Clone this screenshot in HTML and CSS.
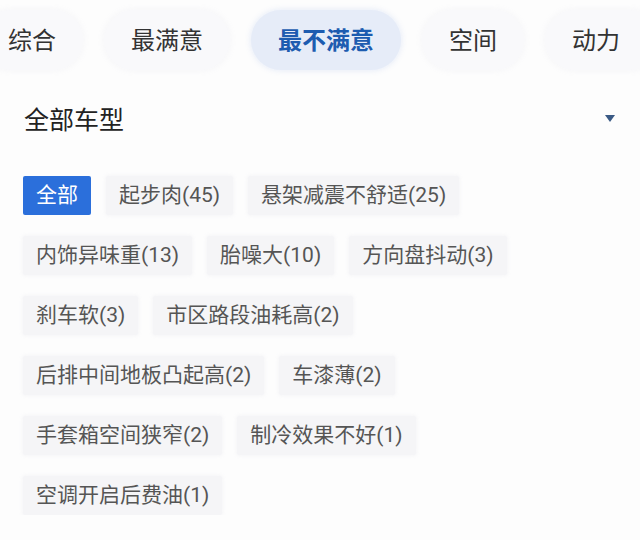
FILE: index.html
```html
<!DOCTYPE html>
<html lang="zh-CN">
<head>
    <meta charset="UTF-8">
    <meta name="viewport" content="width=device-width, initial-scale=1.0">
    <title>口碑标签</title>
    <link rel="stylesheet" href="styles.css">
</head>
<body>
    <div class="tabs">
        <div class="tab">综合</div>
        <div class="tab">最满意</div>
        <div class="tab active">最不满意</div>
        <div class="tab">空间</div>
        <div class="tab">动力</div>
    </div>

    <div class="filter">
        <span class="filter-title">全部车型</span>
        <span class="filter-arrow"></span>
    </div>

    <div class="tags">
        <span class="tag active">全部</span>
        <span class="tag">起步肉(45)</span>
        <span class="tag">悬架减震不舒适(25)</span>
        <span class="tag">内饰异味重(13)</span>
        <span class="tag">胎噪大(10)</span>
        <span class="tag">方向盘抖动(3)</span>
        <span class="tag">刹车软(3)</span>
        <span class="tag">市区路段油耗高(2)</span>
        <span class="tag">后排中间地板凸起高(2)</span>
        <span class="tag">车漆薄(2)</span>
        <span class="tag">手套箱空间狭窄(2)</span>
        <span class="tag">制冷效果不好(1)</span>
        <span class="tag">空调开启后费油(1)</span>
    </div>
</body>
</html>
```

FILE: styles.css
```css
body {
    margin: 0;
    background: #fdfdfd;
    font-family: Roboto, "Noto Sans CJK SC", sans-serif;
    color: #333;
    overflow: hidden;
}
/* Горизонтальная лента вкладок, прокручена чуть влево */
.tabs {
    display: flex;
    gap: 21px;
    margin-left: -19px;
    padding-top: 10px;
    white-space: nowrap;
}
.tab {
    flex-shrink: 0;
    display: flex;
    align-items: center;
    height: 60px;
    padding: 0 27px 3px;
    box-sizing: border-box;
    border-radius: 30px;
    background: #f9f9fb;
    box-shadow: 0 0 6px rgba(243, 243, 246, 0.9);
    font-size: 24px;
    color: #333;
}
.tab:last-child {
    padding-right: 40px;
}
.tab.active {
    background: #e6ecf8;
    box-shadow: 0 0 6px rgba(222, 230, 246, 0.9);
    color: #1d5cb0;
    font-weight: 700;
}
.filter {
    display: flex;
    justify-content: space-between;
    align-items: center;
    height: 40px;
    margin-top: 28px;
    padding: 0 25px 0 24px;
}
.filter-title {
    font-size: 25px;
    color: #222;
}
.filter-arrow {
    width: 0;
    height: 0;
    border-left: 5px solid transparent;
    border-right: 5px solid transparent;
    border-top: 7px solid #3a5a85;
    margin-top: 1px;
}
.tags {
    display: flex;
    flex-wrap: wrap;
    gap: 21px 15px;
    margin-top: 38px;
    padding: 0 60px 0 23px;
}
.tag {
    height: 39px;
    line-height: 39px;
    padding: 0 13px;
    background: #f5f5f7;
    border-radius: 2px;
    box-shadow: 0 0 4px rgba(241, 241, 244, 0.9);
    font-size: 21px;
    color: #555;
}
.tag.active {
    background: #2b6fdb;
    box-shadow: none;
    color: #fff;
}
```
